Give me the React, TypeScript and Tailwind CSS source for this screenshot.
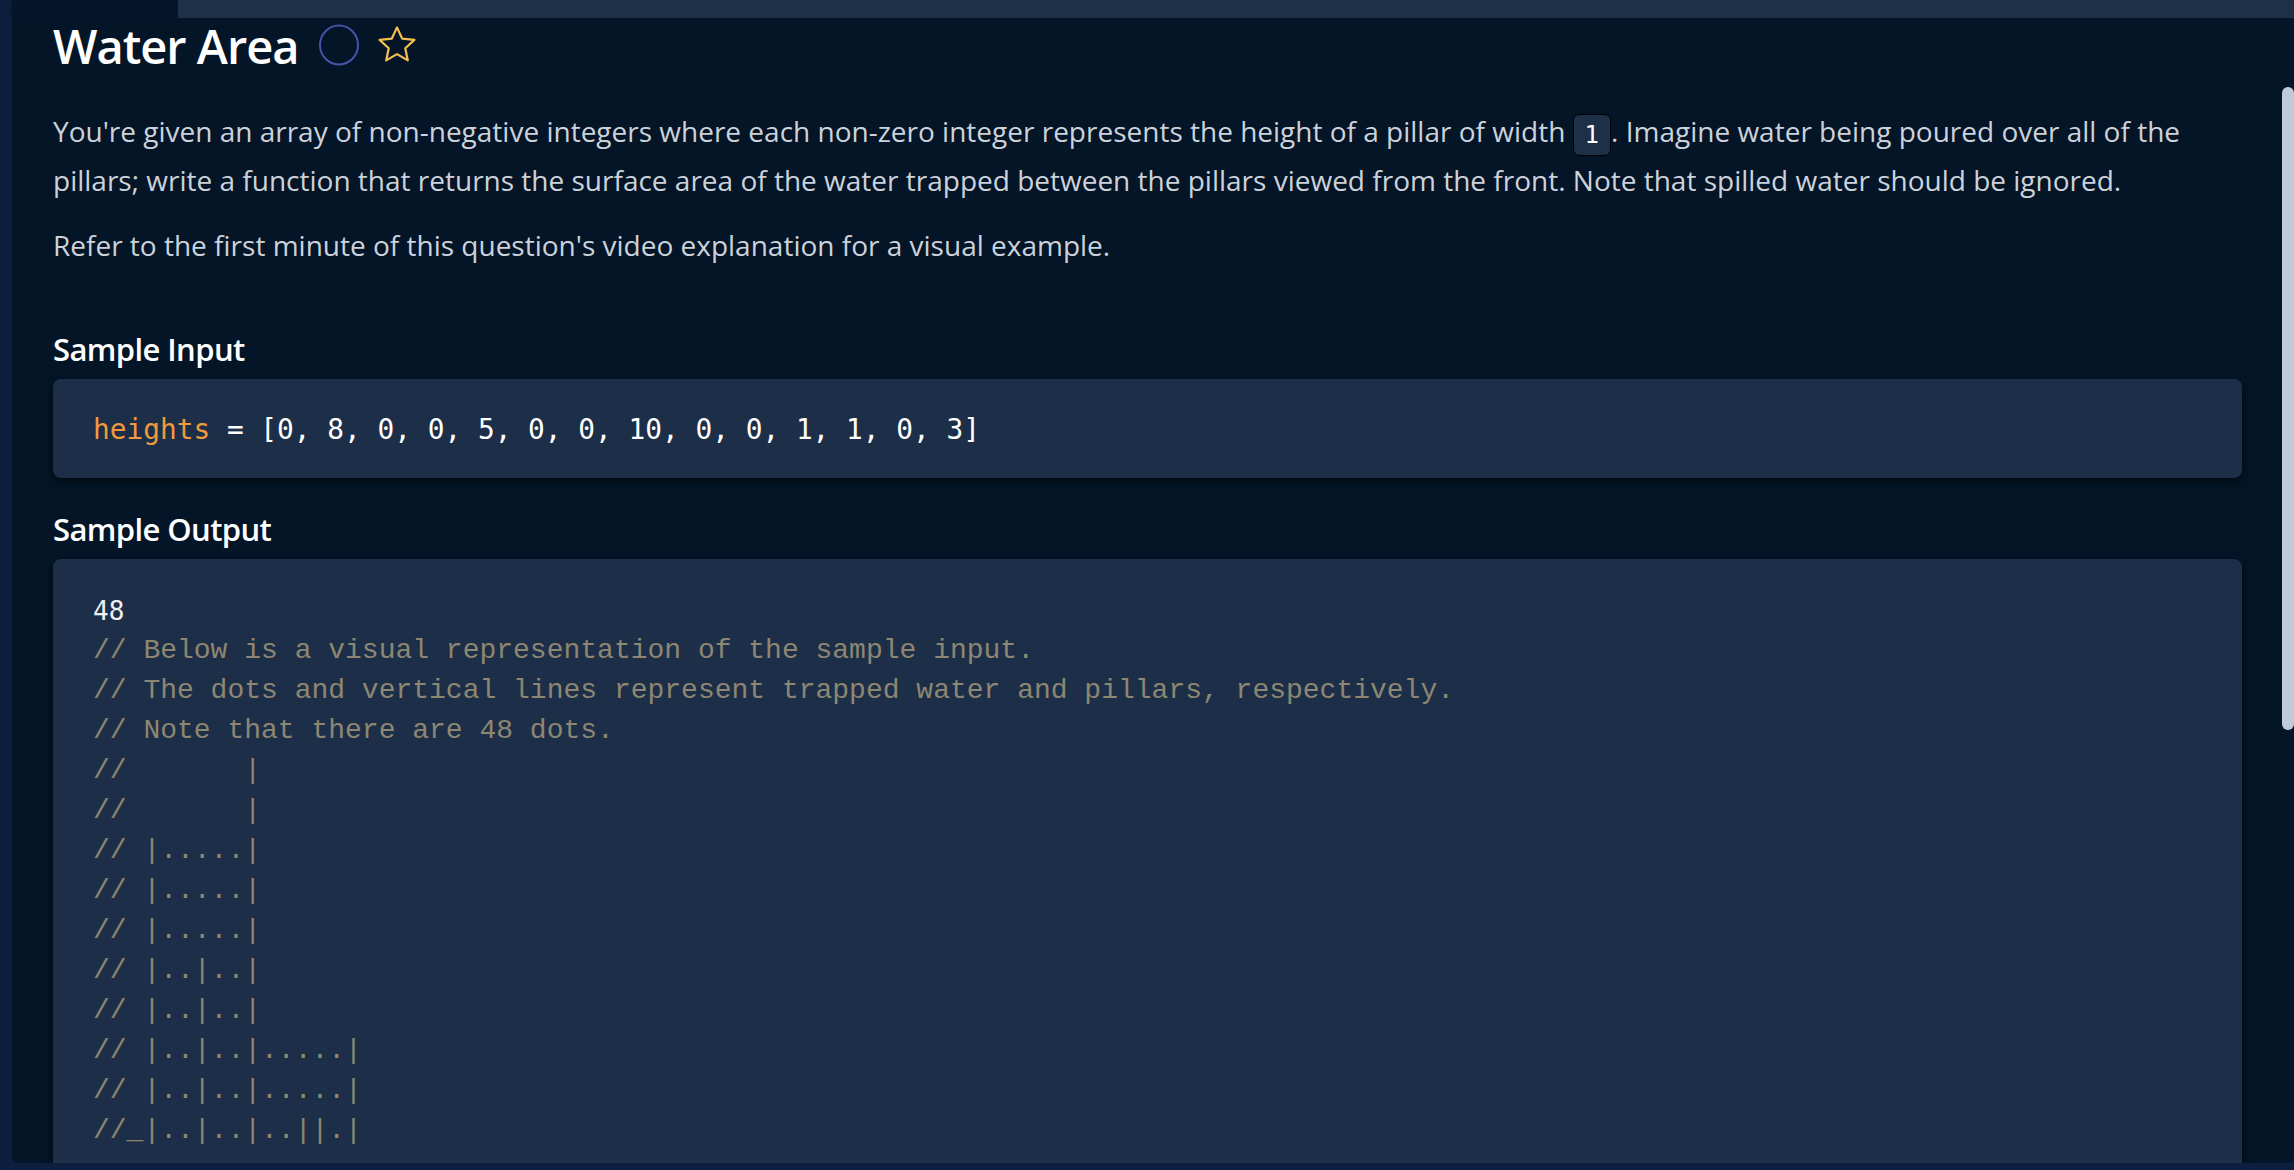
import React from 'react';

const sans = { fontFamily: '"Open Sans", "Noto Sans", sans-serif' };

const art = [
  '//       |',
  '//       |',
  '// |.....|',
  '// |.....|',
  '// |.....|',
  '// |..|..|',
  '// |..|..|',
  '// |..|..|.....|',
  '// |..|..|.....|',
  '//_|..|..|..||.|',
];

const comments = [
  '// Below is a visual representation of the sample input.',
  '// The dots and vertical lines represent trapped water and pillars, respectively.',
  '// Note that there are 48 dots.',
  ...art,
];

function CircleIcon() {
  return (
    <svg width="42" height="42" viewBox="0 0 42 42" fill="none">
      <ellipse cx="21" cy="21" rx="19" ry="19.5" stroke="#4553a6" strokeWidth="2" />
    </svg>
  );
}

function StarIcon() {
  return (
    <svg width="44" height="44" viewBox="0 0 24 24" fill="none">
      <path
        d="M12 2.4l2.8 6.1 6.7.7-5 4.6 1.4 6.6L12 17l-5.9 3.4 1.4-6.6-5-4.6 6.7-.7z"
        stroke="#f4bf4f"
        strokeWidth="1.2"
        strokeLinejoin="round"
      />
    </svg>
  );
}

export default function App() {
  return (
    <div className="flex h-[1170px] w-full overflow-hidden bg-[#0c1f3e]" style={sans}>
      <div className="w-[12px] shrink-0" />
      <div className="flex flex-1 flex-col pb-[7px]">
        <div className="flex h-[18px] shrink-0 shadow-[0_2px_3px_rgba(0,0,0,0.45)]">
          <div className="w-[166px] bg-[#04142a]" />
          <div className="flex-1 bg-[#1e2f48]" />
        </div>
        <div className="flex min-h-0 flex-1 overflow-hidden rounded-b-[6px] bg-[#031527]">
          <div className="flex-1 pl-[41px] pr-[40px]">
            <div className="flex h-[56px] items-center">
              <h1 className="text-[47px] font-semibold leading-[56px] tracking-[-1px] text-white">Water Area</h1>
              <div className="ml-[19px] mt-[-2px] flex items-center gap-[15px]">
                <CircleIcon />
                <StarIcon />
              </div>
            </div>

            <p className="mt-[33px] text-[28px] leading-[48px] text-[#cdd2da]">
              You're given an array of non-negative integers where each non-zero integer represents the height of a
              pillar of width{' '}
              <code className="inline-block h-[42px] rounded-[6px] border border-black bg-[#1e2f48] px-[11px] align-middle font-['DejaVu_Sans_Mono',monospace] text-[24px] leading-[40px] text-white">
                1
              </code>
              . Imagine water being poured over all of the pillars; write a function that returns the surface area of
              the water trapped between the pillars viewed from the front. Note that spilled water should be ignored.
            </p>
            <p className="mt-[17px] text-[28px] leading-[48px] text-[#cdd2da]">
              Refer to the first minute of this question's video explanation for a visual example.
            </p>

            <h2 className="mt-[60px] text-[31px] font-semibold leading-[40px] tracking-[-0.6px] text-white">Sample Input</h2>
            <div className="mt-[10px] flex h-[99px] items-center rounded-[8px] bg-[#1d2f48] px-[40px] pt-[4px] shadow-[0_4px_10px_rgba(0,0,0,0.55)]">
              <pre className="font-['DejaVu_Sans_Mono',monospace] text-[27.8px] text-white">
                <span className="text-[#f09a3e]">heights</span> = [0, 8, 0, 0, 5, 0, 0, 10, 0, 0, 1, 1, 0, 3]
              </pre>
            </div>

            <h2 className="mt-[31px] text-[31px] font-semibold leading-[40px] tracking-[-0.6px] text-white">Sample Output</h2>
            <div className="mt-[10px] rounded-[8px] bg-[#1d2f48] px-[40px] pb-[40px] pt-[32px] shadow-[0_4px_10px_rgba(0,0,0,0.55)]">
              <pre className="font-['Liberation_Mono',monospace] text-[28px] leading-[40px]">
                <div className="font-['DejaVu_Sans_Mono',monospace] text-[26px] text-[#eef0f2]">48</div>
                {comments.map((line, i) => (
                  <div key={i} className="text-[#8d8672]">
                    {line}
                  </div>
                ))}
              </pre>
            </div>
          </div>
          <div className="w-[12px] shrink-0 pt-[69px]">
            <div className="h-[643px] rounded-full bg-[#bfcbdb]" />
          </div>
        </div>
      </div>
    </div>
  );
}
